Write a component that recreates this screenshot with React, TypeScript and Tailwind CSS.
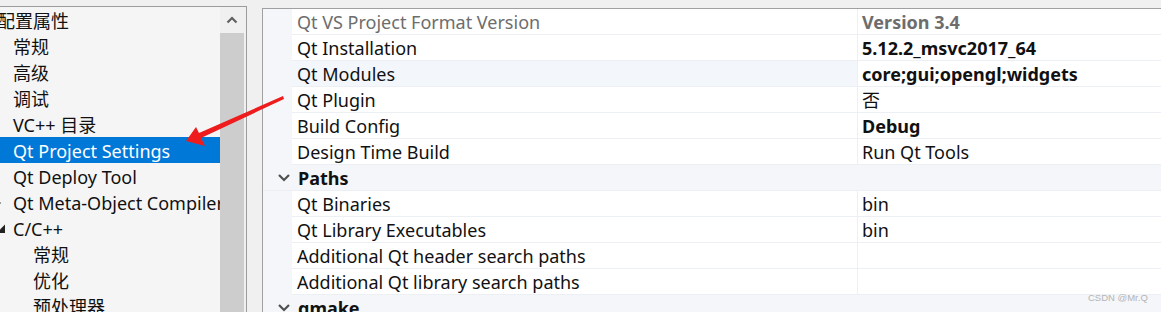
import React from 'react';

type TreeItem = { label: string; level: number; icon?: 'open' | 'closed'; selected?: boolean };

const tree: TreeItem[] = [
  { label: '配置属性', level: 0 },
  { label: '常规', level: 1 },
  { label: '高级', level: 1 },
  { label: '调试', level: 1 },
  { label: 'VC++ 目录', level: 1 },
  { label: 'Qt Project Settings', level: 1, selected: true },
  { label: 'Qt Deploy Tool', level: 1 },
  { label: 'Qt Meta-Object Compiler', level: 1, icon: 'closed' },
  { label: 'C/C++', level: 1, icon: 'open' },
  { label: '常规', level: 2 },
  { label: '优化', level: 2 },
  { label: '预处理器', level: 2 },
];

type Row =
  | { kind: 'prop'; name: string; value?: string; bold?: boolean; muted?: boolean; hover?: boolean }
  | { kind: 'cat'; name: string };

const rows: Row[] = [
  { kind: 'prop', name: 'Qt VS Project Format Version', value: 'Version 3.4', bold: true, muted: true },
  { kind: 'prop', name: 'Qt Installation', value: '5.12.2_msvc2017_64', bold: true },
  { kind: 'prop', name: 'Qt Modules', value: 'core;gui;opengl;widgets', bold: true, hover: true },
  { kind: 'prop', name: 'Qt Plugin', value: '否' },
  { kind: 'prop', name: 'Build Config', value: 'Debug', bold: true },
  { kind: 'prop', name: 'Design Time Build', value: 'Run Qt Tools' },
  { kind: 'cat', name: 'Paths' },
  { kind: 'prop', name: 'Qt Binaries', value: 'bin' },
  { kind: 'prop', name: 'Qt Library Executables', value: 'bin' },
  { kind: 'prop', name: 'Additional Qt header search paths' },
  { kind: 'prop', name: 'Additional Qt library search paths' },
  { kind: 'cat', name: 'qmake' },
];

function TreeIcon({ icon }: { icon?: 'open' | 'closed' }) {
  return (
    <div className="w-[21px] ml-[-8px] flex items-center shrink-0">
      {icon === 'closed' && (
        <svg width="14" height="12" viewBox="0 0 14 12">
          <path d="M3.5 1.5 L8.5 6 L3.5 10.5 Z" fill="none" stroke="#333" strokeWidth="1" />
        </svg>
      )}
      {icon === 'open' && (
        <svg width="14" height="12" viewBox="0 0 14 12">
          <path d="M13 1.5 L13 10 L4.5 10 Z" fill="#222" />
        </svg>
      )}
    </div>
  );
}

function Chevron() {
  return (
    <svg width="14" height="9" viewBox="0 0 14 9">
      <path d="M2 2 L7 7 L12 2" fill="none" stroke="#505050" strokeWidth="2.2" />
    </svg>
  );
}

export default function App() {
  return (
    <div className="relative w-[1161px] h-[312px] overflow-hidden bg-[#f0f0f0] flex items-start font-['Noto_Sans','Noto_Sans_CJK_SC',sans-serif] text-[18px] leading-[24px] text-[#111]">
      {/* left tree */}
      <div className="mt-[6px] w-[247px] h-[320px] border-t border-r border-[#9c9c9c] flex shrink-0">
        <div className="w-[220px] bg-[#f5f5f5] overflow-hidden">
          {tree.map((t, i) => (
            <div
              key={i}
              className={`h-[26px] pt-[2px] flex items-center whitespace-nowrap ${t.selected ? 'bg-[#0078d7] text-white' : ''}`}
            >
              {t.level === 0 ? (
                <span className="ml-[-3px]">{t.label}</span>
              ) : (
                <>
                  <TreeIcon icon={t.icon} />
                  {t.level === 2 && <div className="w-[20px] shrink-0" />}
                  <span>{t.label}</span>
                </>
              )}
            </div>
          ))}
        </div>
        <div className="w-[26px] bg-[#f0f0f0] flex flex-col">
          <div className="h-[26px] w-[24px] flex items-center justify-center">
            <svg width="12" height="8" viewBox="0 0 12 8">
              <path d="M1.5 6.5 L6 2 L10.5 6.5" fill="none" stroke="#606060" strokeWidth="2.2" />
            </svg>
          </div>
          <div className="flex-1 w-[24px] bg-[#cdcdcd]" />
        </div>
      </div>

      {/* property grid */}
      <div className="mt-[8px] ml-[15px] flex-1 h-[320px] border-t border-l border-[#a0a0a0] bg-white">
        {rows.map((r, i) =>
          r.kind === 'cat' ? (
            <div key={i} className="h-[26px] flex bg-[#f4f6fa] border-b border-[#eceff3]">
              <div className="w-[29px] flex items-center justify-end pr-[1px]">
                <Chevron />
              </div>
              <div className="pl-[6px] pt-[1px] flex items-center font-bold">{r.name}</div>
            </div>
          ) : (
            <div key={i} className="h-[26px] flex">
              <div className="w-[29px] bg-[#f4f6fa] shrink-0" />
              <div
                className={`w-[566px] shrink-0 pl-[5px] pt-[1px] flex items-center border-b border-r border-[#eceff3] whitespace-nowrap ${
                  r.hover ? 'bg-[#f3f6fb]' : ''
                } ${r.muted ? 'text-[#6d6d6d]' : ''}`}
              >
                {r.name}
              </div>
              <div
                className={`flex-1 pl-[4px] pt-[1px] flex items-center border-b border-[#eceff3] whitespace-nowrap ${
                  r.bold ? 'font-bold' : ''
                } ${r.muted ? 'text-[#6d6d6d]' : ''}`}
              >
                {r.value}
              </div>
            </div>
          )
        )}
      </div>

      {/* annotation arrow */}
      <svg className="absolute left-0 top-0 pointer-events-none" width="1161" height="312">
        <polygon
          points="186,141 196,127 199,133 283,96 284,99 201,138 205,146"
          fill="#ee1c1c"
        />
      </svg>

      <div className="absolute left-[1088px] top-[292px] text-[9.5px] leading-[12px] text-[#b4b4b4] font-['Liberation_Sans',sans-serif]">
        CSDN @Mr.Q
      </div>
    </div>
  );
}
